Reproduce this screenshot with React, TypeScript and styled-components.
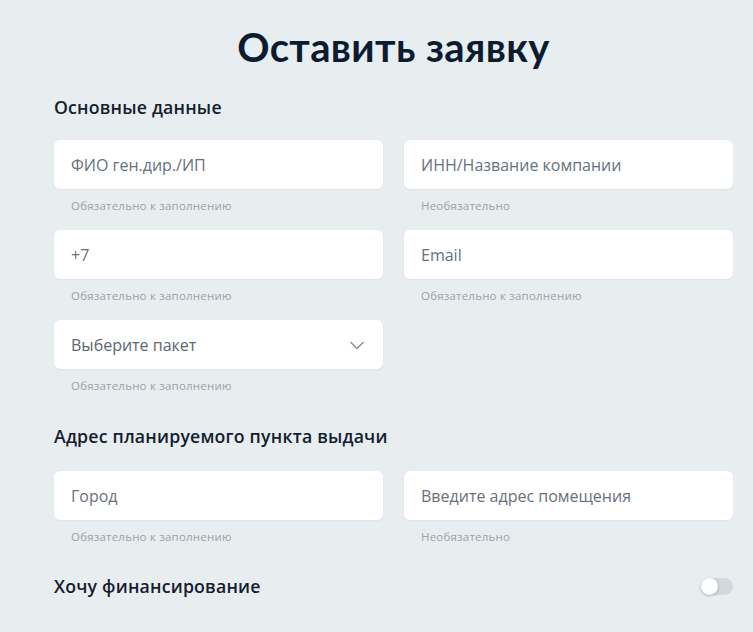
import React, { useState } from "react";
import styled, { createGlobalStyle } from "styled-components";

const GlobalStyle = createGlobalStyle`
  html, body {
    margin: 0;
    padding: 0;
    background: #e8edf0;
    font-family: "Open Sans", "Noto Sans", sans-serif;
  }
  * { box-sizing: border-box; }
`;

type Field = { placeholder: string; hint: string; select?: boolean };

const mainFields: Field[] = [
  { placeholder: "ФИО ген.дир./ИП", hint: "Обязательно к заполнению" },
  { placeholder: "ИНН/Название компании", hint: "Необязательно" },
  { placeholder: "+7", hint: "Обязательно к заполнению" },
  { placeholder: "Email", hint: "Обязательно к заполнению" },
  { placeholder: "Выберите пакет", hint: "Обязательно к заполнению", select: true },
];

const addressFields: Field[] = [
  { placeholder: "Город", hint: "Обязательно к заполнению" },
  { placeholder: "Введите адрес помещения", hint: "Необязательно" },
];

function FormField({ field }: { field: Field }) {
  return (
    <FieldWrap>
      <InputBox>
        {field.select ? (
          <SelectText>{field.placeholder}</SelectText>
        ) : (
          <Input placeholder={field.placeholder} />
        )}
        {field.select && (
          <Chevron viewBox="0 0 16 16" width="16" height="16">
            <path d="M2 5.5l6 6 6-6" fill="none" stroke="#8a949c" strokeWidth="1.6" strokeLinecap="round" strokeLinejoin="round" />
          </Chevron>
        )}
      </InputBox>
      <Hint>{field.hint}</Hint>
    </FieldWrap>
  );
}

export default function App() {
  const [finance, setFinance] = useState(false);
  return (
    <>
      <GlobalStyle />
      <Page>
        <Title>Оставить заявку</Title>
        <SectionTitle>Основные данные</SectionTitle>
        <Grid>
          {mainFields.map((f, i) => (
            <FormField key={i} field={f} />
          ))}
        </Grid>
        <SectionTitle $top={15} $bottom={24}>Адрес планируемого пункта выдачи</SectionTitle>
        <Grid>
          {addressFields.map((f, i) => (
            <FormField key={i} field={f} />
          ))}
        </Grid>
        <FinanceRow>
          <SectionTitle $top={0} $bottom={0}>Хочу финансирование</SectionTitle>
          <Toggle $on={finance} onClick={() => setFinance((v) => !v)}>
            <Knob $on={finance} />
          </Toggle>
        </FinanceRow>
      </Page>
    </>
  );
}

const Page = styled.div`
  padding: 22px 20px 0 54px;
`;

const Title = styled.h1`
  margin: 0;
  text-align: center;
  font-family: Lato, "Noto Sans", sans-serif;
  font-size: 40px;
  font-weight: 700;
  line-height: 50px;
  color: #0b1c30;
  letter-spacing: 0.4px;
`;

const SectionTitle = styled.h2<{ $top?: number; $bottom?: number }>`
  margin: ${({ $top }) => ($top ?? 24)}px 0 ${({ $bottom }) => ($bottom ?? 22)}px;
  font-size: 17.7px;
  font-weight: 600;
  line-height: 22px;
  color: #14202e;
  letter-spacing: 0.2px;
`;

const Grid = styled.div`
  display: grid;
  grid-template-columns: 329px 329px;
  column-gap: 21px;
`;

const FieldWrap = styled.div`
  display: flex;
  flex-direction: column;
  height: 90px;
`;

const InputBox = styled.div`
  position: relative;
  height: 49px;
  background: #fff;
  border-radius: 6px;
  display: flex;
  align-items: center;
  box-shadow: 0 1px 2px rgba(20, 40, 60, 0.05);
`;

const Input = styled.input`
  width: 100%;
  height: 100%;
  border: none;
  outline: none;
  background: transparent;
  padding: 0 17px;
  font-family: inherit;
  font-size: 16px;
  color: #1c2a38;
  &::placeholder {
    color: #66717b;
  }
`;

const SelectText = styled.span`
  flex: 1;
  padding: 0 17px;
  font-size: 16px;
  color: #5b6670;
`;

const Chevron = styled.svg`
  margin-right: 18px;
`;

const Hint = styled.span`
  margin: 9px 0 0 17px;
  font-size: 11.5px;
  color: #9aa2aa;
  letter-spacing: 0.2px;
`;

const FinanceRow = styled.div`
  display: flex;
  align-items: center;
  justify-content: space-between;
  margin-top: 14px;
  width: 679px;
`;

const Toggle = styled.button<{ $on: boolean }>`
  position: relative;
  width: 32px;
  height: 17px;
  padding: 0;
  border: none;
  border-radius: 9px;
  background: ${({ $on }) => ($on ? "#2a7de1" : "#d2d8dd")};
  cursor: pointer;
`;

const Knob = styled.span<{ $on: boolean }>`
  position: absolute;
  top: 0;
  left: ${({ $on }) => ($on ? "15px" : "0")};
  width: 17px;
  height: 17px;
  border-radius: 50%;
  background: #fff;
  box-shadow: 0 1px 3px rgba(0, 0, 0, 0.25);
`;
